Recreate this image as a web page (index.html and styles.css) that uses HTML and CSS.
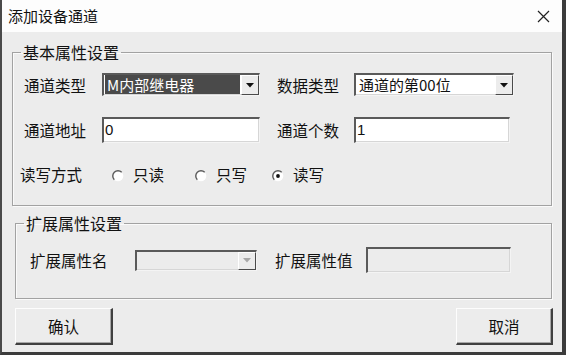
FILE: index.html
```html
<!DOCTYPE html>
<html lang="zh-CN">
<head>
<meta charset="utf-8">
<title>添加设备通道</title>
<link rel="stylesheet" href="styles.css">
</head>
<body>
<div class="window">
  <div class="titlebar">
    <span class="title">添加设备通道</span>
    <svg class="close" width="13" height="13" viewBox="0 0 13 13"><path d="M1 1 L12 12 M12 1 L1 12" stroke="#222" stroke-width="1.2" fill="none"/></svg>
  </div>
  <div class="client">
    <fieldset class="group g1">
      <legend>基本属性设置</legend>
      <div class="row r1">
        <span class="lbl w78">通道类型</span>
        <div class="combo sunken w158">
          <span class="combo-text sel">M内部继电器</span>
          <span class="drop"><svg width="8" height="5" viewBox="0 0 8 5"><path d="M0 0 H8 L4 4.5 Z" fill="#111"/></svg></span>
        </div>
        <span class="lbl w77 ml17">数据类型</span>
        <div class="combo sunken w160">
          <span class="combo-text">通道的第00位</span>
          <span class="drop"><svg width="8" height="5" viewBox="0 0 8 5"><path d="M0 0 H8 L4 4.5 Z" fill="#111"/></svg></span>
        </div>
      </div>
      <div class="row r2">
        <span class="lbl w78">通道地址</span>
        <div class="input sunken w158">0</div>
        <span class="lbl w77 ml17">通道个数</span>
        <div class="input sunken w156">1</div>
      </div>
      <div class="row r3">
        <span class="lbl w92">读写方式</span>
        <span class="radio">
          <svg width="12" height="12" viewBox="0 0 12 12"><circle cx="6" cy="6" r="5.3" fill="#fff"/><path d="M2.3 9.7 A5.2 5.2 0 0 1 9.7 2.3" stroke="#5a5a5a" stroke-width="1.4" fill="none"/></svg>
          <span class="rtext">只读</span>
        </span>
        <span class="radio mr2">
          <svg width="12" height="12" viewBox="0 0 12 12"><circle cx="6" cy="6" r="5.3" fill="#fff"/><path d="M2.3 9.7 A5.2 5.2 0 0 1 9.7 2.3" stroke="#5a5a5a" stroke-width="1.4" fill="none"/></svg>
          <span class="rtext">只写</span>
        </span>
        <span class="radio mr3">
          <svg width="12" height="12" viewBox="0 0 12 12"><circle cx="6" cy="6" r="5.3" fill="#fff"/><path d="M2.3 9.7 A5.2 5.2 0 0 1 9.7 2.3" stroke="#5a5a5a" stroke-width="1.4" fill="none"/><circle cx="6" cy="6" r="1.9" fill="#111"/></svg>
          <span class="rtext">读写</span>
        </span>
      </div>
    </fieldset>
    <fieldset class="group g2">
      <legend>扩展属性设置</legend>
      <div class="row r4">
        <span class="lbl w105">扩展属性名</span>
        <div class="combo sunken disabled w122">
          <span class="combo-text"></span>
          <span class="drop"><svg width="8" height="5" viewBox="0 0 8 5"><path d="M0 0 H8 L4 4.5 Z" fill="#a8a8a8"/></svg></span>
        </div>
        <span class="lbl w91 ml18">扩展属性值</span>
        <div class="input sunken disabled w145"></div>
      </div>
    </fieldset>
    <div class="buttons">
      <button class="btn b1">确认</button>
      <button class="btn b2">取消</button>
    </div>
  </div>
</div>
</body>
</html>
```

FILE: styles.css
```css
* { box-sizing: border-box; }

body {
  margin: 0;
  width: 566px;
  height: 355px;
  overflow: hidden;
  font-family: "Noto Sans CJK SC", "Noto Sans", sans-serif;
  color: #111;
}

.window {
  width: 566px;
  height: 355px;
  background: #ececec;
  border-left: 2px solid #4a4a4a;
  border-right: 4px solid #3c3c3c;
  border-bottom: 3px solid #3c3c3c;
  display: flex;
  flex-direction: column;
}

.titlebar {
  height: 32px;
  flex: none;
  background: #fdfdfd;
  display: flex;
  align-items: center;
  justify-content: space-between;
  padding: 0 12px 0 6px;
}

.title {
  font-size: 15px;
  line-height: 20px;
}

.client {
  flex: 1;
  display: flex;
  flex-direction: column;
}

.group {
  margin: 10px 10px 0 10px;
  padding: 0;
  min-width: 0;
  border: 1px solid #a2a2a2;
  box-shadow: inset 1px 1px 0 #fafafa, 1px 1px 0 #fafafa;
}

.group legend {
  margin-left: 8px;
  padding: 0 2px;
  font-size: 16px;
  line-height: 20px;
}

.g2 {
  margin: 7px 10px 0 13px;
}

.row {
  display: flex;
  align-items: center;
}

.r1 { margin-top: 11px; height: 23px; padding-left: 11px; }
.r2 { margin-top: 21px; height: 26px; padding-left: 11px; }
.r3 { margin-top: 21px; height: 20px; padding-left: 7px; margin-bottom: 21px; }
.r4 { margin-top: 14px; height: 26px; padding-left: 14px; margin-bottom: 25px; }

.lbl {
  font-size: 15.5px;
  line-height: 20px;
  white-space: nowrap;
  flex: none;
}

.w78 { width: 78px; }
.w77 { width: 77px; }
.w92 { width: 92px; }
.w105 { width: 105px; }
.w91 { width: 91px; }
.ml17 { margin-left: 17px; }
.ml18 { margin-left: 18px; }

.w158 { width: 158px; }
.w160 { width: 160px; }
.w156 { width: 156px; }
.w122 { width: 122px; }
.w145 { width: 145px; }

.sunken {
  border-top: 2px solid #5a5a5a;
  border-left: 2px solid #5a5a5a;
  border-bottom: 1px solid #f4f4f4;
  border-right: 1px solid #f4f4f4;
  box-shadow: inset -1px -1px 0 #d6d6d6;
  flex: none;
}

.combo {
  height: 23px;
  background: #fff;
  display: flex;
  align-items: stretch;
}

.combo.disabled {
  height: 21px;
  background: #ececec;
}

.combo-text {
  flex: 1;
  font-size: 15px;
  line-height: 19px;
  padding-left: 3px;
  white-space: nowrap;
  overflow: hidden;
}

.combo-text.sel {
  background: #4a4a4a;
  color: #fff;
  margin: 0 1px 1px 1px;
  padding-left: 2px;
}

.drop {
  width: 18px;
  flex: none;
  background: #ececec;
  border-top: 1px solid #fff;
  border-left: 1px solid #fff;
  border-right: 1px solid #4a4a4a;
  border-bottom: 1px solid #4a4a4a;
  display: flex;
  align-items: center;
  justify-content: center;
}

.input {
  height: 26px;
  background: #fff;
  font-size: 15px;
  line-height: 22px;
  padding-left: 1px;
  font-family: "Liberation Sans", "Noto Sans CJK SC", sans-serif;
}

.input.disabled {
  background: #ececec;
}

.radio {
  display: flex;
  align-items: center;
  flex: none;
}

.radio svg {
  margin-top: 3px;
  flex: none;
}

.rtext {
  margin-left: 9px;
  font-size: 15.5px;
  line-height: 20px;
}

.mr2 { margin-left: 31px; }
.mr3 { margin-left: 25px; }

.buttons {
  margin-top: 9px;
  display: flex;
  justify-content: space-between;
  padding: 0 9px 0 13px;
}

.btn {
  height: 37px;
  background: #ececec;
  border-top: 1px solid #fdfdfd;
  border-left: 1px solid #fdfdfd;
  border-right: 2px solid #404040;
  border-bottom: 2px solid #404040;
  box-shadow: inset -1px -1px 0 #a8a8a8;
  font-family: "Noto Sans CJK SC", sans-serif;
  font-size: 15.5px;
  color: #111;
  padding: 0;
}

.b1 { width: 98px; }
.b2 { width: 97px; }
```
